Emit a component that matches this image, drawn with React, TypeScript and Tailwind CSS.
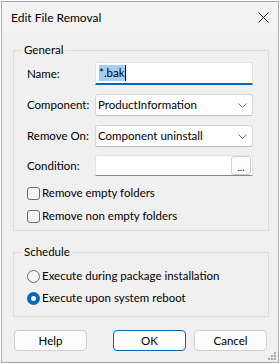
import React from "react";

function Chevron() {
  return (
    <svg width="9" height="5" viewBox="0 0 9 5" className="text-[#707070]">
      <path d="M0.5 0.5 L4.5 4.5 L8.5 0.5" fill="none" stroke="currentColor" strokeWidth="1" />
    </svg>
  );
}

function SelectBox({ value }: { value: string }) {
  return (
    <div className="flex h-[22px] w-[158px] items-center justify-between rounded-[3px] border border-[#d6d6d6] border-b-[#bcbcbc] bg-white pl-[2px] pr-[5px]">
      <span>{value}</span>
      <Chevron />
    </div>
  );
}

function Checkbox({ label }: { label: string }) {
  return (
    <label className="flex h-[16px] items-center gap-[2px]">
      <span className="h-[13px] w-[13px] rounded-[3px] border border-[#6a6a6a] bg-[#f7f7f7]" />
      <span>{label}</span>
    </label>
  );
}

function Radio({ label, checked }: { label: string; checked?: boolean }) {
  return (
    <label className="flex h-[16px] items-center gap-[2px]">
      {checked ? (
        <span className="flex h-[13px] w-[13px] items-center justify-center rounded-full bg-[#0067c0]">
          <span className="h-[5px] w-[5px] rounded-full bg-white" />
        </span>
      ) : (
        <span className="h-[13px] w-[13px] rounded-full border border-[#6a6a6a] bg-[#f7f7f7]" />
      )}
      <span>{label}</span>
    </label>
  );
}

function Row({ label, children, className }: { label: string; children: React.ReactNode; className?: string }) {
  return (
    <div className={"flex items-center " + (className ?? "")}>
      <span className="w-[68px] shrink-0 whitespace-nowrap">{label}</span>
      {children}
    </div>
  );
}

export default function App() {
  return (
    <div className="h-[364px] w-[280px] bg-white p-px font-['Lato',sans-serif] text-[11.5px] leading-[16px] text-black">
      <div className="relative flex h-[362px] w-[278px] flex-col border border-[#a9a9a9] bg-[#f0f0f0]">
        <div className="flex h-[31px] shrink-0 items-center justify-between bg-[#f3f3f3] px-[9px]">
          <span className="text-[12px]">Edit File Removal</span>
          <svg width="11" height="11" viewBox="0 0 11 11">
            <path d="M0.5 0.5 L10.5 10.5 M10.5 0.5 L0.5 10.5" stroke="#1a1a1a" strokeWidth="1" />
          </svg>
        </div>

        <fieldset className="ml-[11px] mt-[9px] w-[256px] border border-[#dcdcdc] pb-[6px] pl-[13px]">
          <legend className="ml-[-5px] px-[2px]">General</legend>
          <Row label="Name:" className="pt-[4px]">
            <div className="flex h-[23px] w-[158px] items-center rounded-t-[3px] border border-[#e3e3e3] border-b-2 border-b-[#0067c0] bg-white pl-[3px]">
              <span className="bg-[#a6cdf2]">*.bak</span>
              <span className="h-[16px] w-px bg-black" />
            </div>
          </Row>
          <Row label="Component:" className="mt-[9px]">
            <SelectBox value="ProductInformation" />
          </Row>
          <Row label="Remove On:" className="mt-[9px]">
            <SelectBox value="Component uninstall" />
          </Row>
          <Row label="Condition:" className="mt-[8px]">
            <div className="flex h-[21px] w-[158px] items-start justify-end rounded-t-[3px] border border-[#e3e3e3] border-b-[#868686] bg-white pr-px">
              <button className="flex h-[19px] w-[20px] items-end justify-center rounded-[3px] border border-[#d0d0d0] bg-[#fdfdfd] pb-[2px] text-[10px] leading-[10px]">
                ...
              </button>
            </div>
          </Row>
          <div className="mt-[9px]">
            <Checkbox label="Remove empty folders" />
          </div>
          <div className="mt-[7px]">
            <Checkbox label="Remove non empty folders" />
          </div>
        </fieldset>

        <fieldset className="ml-[11px] mt-[13px] w-[256px] border border-[#dcdcdc] pb-[10px] pl-[13px] pt-[8px]">
          <legend className="ml-[-5px] px-[2px]">Schedule</legend>
          <Radio label="Execute during package installation" />
          <div className="mt-[6px]">
            <Radio label="Execute upon system reboot" checked />
          </div>
        </fieldset>

        <div className="mt-[13px] flex pl-[12px] pr-[11px]">
          <button className="h-[21px] w-[73px] rounded-[4px] border border-[#d0d0d0] bg-[#fdfdfd]">Help</button>
          <button className="ml-auto h-[21px] w-[73px] rounded-[4px] border border-[#0067c0] bg-[#fdfdfd]">OK</button>
          <button className="ml-[8px] h-[21px] w-[73px] rounded-[4px] border border-[#d0d0d0] bg-[#fdfdfd]">Cancel</button>
        </div>

        <svg width="10" height="10" viewBox="0 0 10 10" className="absolute bottom-[1px] right-[1px]">
          <g fill="#a8a8a8">
            <rect x="7" y="1" width="2" height="2" />
            <rect x="4" y="4" width="2" height="2" />
            <rect x="7" y="4" width="2" height="2" />
            <rect x="1" y="7" width="2" height="2" />
            <rect x="4" y="7" width="2" height="2" />
            <rect x="7" y="7" width="2" height="2" />
          </g>
        </svg>
      </div>
    </div>
  );
}
